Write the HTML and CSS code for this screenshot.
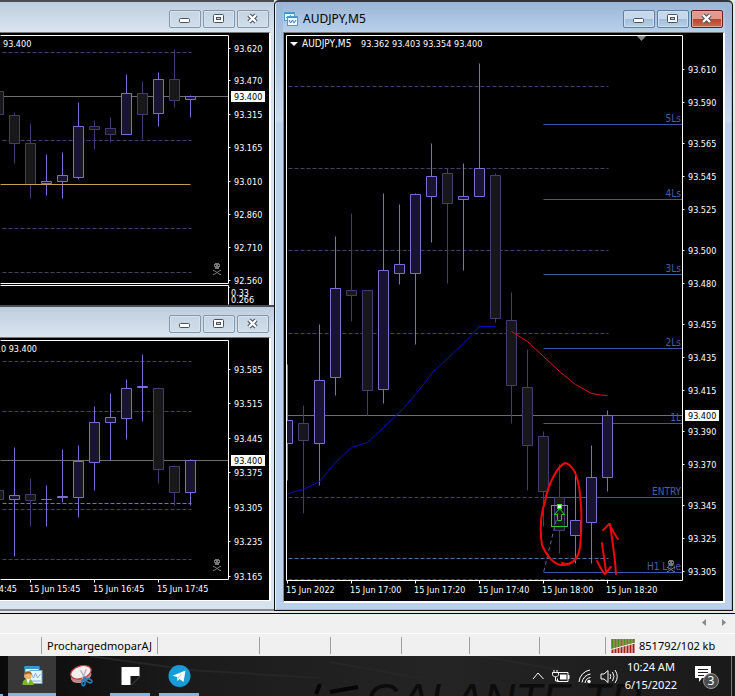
FILE: index.html
```html
<!DOCTYPE html>
<html lang="en">
<head>
<meta charset="utf-8">
<title>AUDJPY,M5</title>
<link rel="stylesheet" href="styles.css">
</head>
<body>
<svg class="defs" width="0" height="0" aria-hidden="true">
  <defs>
    <symbol id="ico-min" viewBox="0 0 16 12"><rect x="2.500" y="5.500" width="10" height="4" rx="1" fill="#fff" stroke="#4a5260"/></symbol>
    <symbol id="ico-max" viewBox="0 0 16 12"><rect x="2.500" y="1.500" width="10" height="8" rx="1" fill="#fff" stroke="#4a5260"/><rect x="5.500" y="4.500" width="4" height="2" fill="#c9d6e4" stroke="#4a5260"/></symbol>
    <symbol id="ico-close" viewBox="0 0 16 12"><path d="M4 2l7 7M11 2l-7 7" stroke="#4a5260" stroke-width="4.500"/><path d="M4 2l7 7M11 2l-7 7" stroke="#fff" stroke-width="2.300"/></symbol>
    <symbol id="skull" viewBox="0 0 10 13"><path fill="#777" fill-rule="evenodd" d="M3 0h4v1h1v3h-1v2h-4v-2h-1v-3h1zM3 2v1h1v-1zM6 2v1h1v-1z"/><path fill="none" stroke="#777" d="M1 7.500h1l6 4h1M9 7.500h-1l-6 4h-1"/></symbol>
  </defs>
</svg>

<main class="workspace">
  <div class="column">
    <section class="win">
      <header class="titlebar">
        <button class="cap" aria-label="Minimize"><svg><use href="#ico-min"/></svg></button>
        <button class="cap" aria-label="Maximize"><svg><use href="#ico-max"/></svg></button>
        <button class="cap" aria-label="Close"><svg><use href="#ico-close"/></svg></button>
      </header>
      <div class="pane">
        <svg class="chart" viewBox="0 33 269 272" data-chart="top">
          <g transform="translate(.5 .5)">
            <path class="grid" d="M2 52H191M2 140H191M2 228H191M2 272H191"/>
            <path class="price" d="M0 96H228"/>
            <g class="candles"></g>
            <path class="gold" d="M0 184H190"/>
            <path class="axis" d="M0 35H228V283H0M0 285H228V304M228 48h2M228 80h2M228 114h2M228 147h2M228 181h2M228 214h2M228 247h2M228 280h2M228 287h1"/>
          </g>
          <text x="3" y="47">93.400</text>
          <g class="labels"></g>
          <text x="231" y="296">0.33</text><text x="231" y="303">0.266</text>
          <use href="#skull" x="212" y="263" width="10" height="13"/>
        </svg>
      </div>
    </section>
    <section class="win win-last">
      <header class="titlebar">
        <button class="cap" aria-label="Minimize"><svg><use href="#ico-min"/></svg></button>
        <button class="cap" aria-label="Maximize"><svg><use href="#ico-max"/></svg></button>
        <button class="cap" aria-label="Close"><svg><use href="#ico-close"/></svg></button>
      </header>
      <div class="pane">
        <svg class="chart" viewBox="0 338 269 262" data-chart="bottom">
          <g transform="translate(.5 .5)">
            <path class="grid" d="M2 361H191M2 411H191M2 509H191M2 559H191"/>
            <path class="grid grid-lit" d="M2 503H191"/>
            <path class="price" d="M0 460H228"/>
            <g class="candles"></g>
            <path class="axis" d="M0 340H228V579H0M30 579v3M94 579v3M158 579v3M228 369h2M228 403h2M228 438h2M228 472h2M228 507h2M228 541h2M228 576h2"/>
          </g>
          <text x="37" y="352" text-anchor="end">10 93.400</text>
          <g class="labels"></g>
          <text x="17" y="592" text-anchor="end">14:45</text><text x="29" y="592">15 Jun 15:45</text><text x="93" y="592">15 Jun 16:45</text><text x="157" y="592">15 Jun 17:45</text>
          <use href="#skull" x="212" y="559" width="10" height="13"/>
        </svg>
      </div>
    </section>
  </div>

  <section class="win win-active">
    <header class="titlebar">
      <svg class="title-icon" viewBox="0 0 14 14"><rect x=".5" y=".5" width="10" height="8" fill="#e8f6fd" stroke="#4d9fd0"/><path d="M1 1.500h9" stroke="#3b93cc"/><path d="M2 6l2-2 1 1 2-2" fill="none" stroke="#4d9fd0"/><rect x="3.500" y="4.500" width="10" height="9" fill="#eefaff" stroke="#4d9fd0"/><path d="M4 5.500h9" stroke="#3b93cc"/><path d="M5 8l1.500 3 2-3 1.500 3 2-3" fill="none" stroke="#3b78a8"/></svg>
      <h1 class="title">AUDJPY,M5</h1>
      <button class="cap" aria-label="Minimize"><svg><use href="#ico-min"/></svg></button>
      <button class="cap" aria-label="Maximize"><svg><use href="#ico-max"/></svg></button>
      <button class="cap cap-close" aria-label="Close"><svg><use href="#ico-close"/></svg></button>
    </header>
    <div class="pane">
      <svg class="chart" viewBox="284 33 439 568" data-chart="main">
        <g transform="translate(.5 .5)">
          <path class="grid" d="M288 86H608M288 168H608M288 250H608M288 333H608M288 497H543M288 579H608"/>
          <path class="grid grid-cyan" d="M288 558H608"/>
          <path class="price" d="M287 415H682"/>
          <path class="level" d="M543 124H682M543 199H682M543 274H682M543 348H682M543 423H682M543 497H682M543 572H682"/>
          <g class="candles"></g>
          <path class="ma-blue" d="M287 494L291 492L303 489L319 481L335 462L351 447L367 442L383 427L402 409L415 394L433 371L447 358L463 343L479 326H495"/>
          <path class="ma-red" d="M511 331L527 341L543 356L559 371L575 384L591 393L600 394.500L607 395"/>
          <path class="order" d="M559 506L543 572"/>
          <path class="axis" d="M286 580V35H682V580ZM287 580v3M351 580v3M415 580v3M479 580v3M543 580v3M607 580v3M682 69h2M682 102h2M682 143h2M682 176h2M682 209h2M682 250h2M682 283h2M682 324h2M682 357h2M682 390h2M682 431h2M682 464h2M682 505h2M682 538h2M682 571h2"/>
          <rect class="mark" x="551" y="505" width="16" height="21"/>
          <path class="mark" d="M559 508l-5 6h3v6h4v-6h3z"/>
          <rect x="557" y="504" width="4" height="4" fill="#e8ffe8" stroke="#3ae03a"/>
        </g>
        <path d="M290 42h8l-4 4z" fill="#fff"/>
        <path d="M637 36h9l-4.500 5z" fill="#888"/>
        <text class="quote" x="302" y="47">AUDJPY,M5</text>
        <text x="361" y="47">93.362</text><text x="392" y="47">93.403</text><text x="423" y="47">93.354</text><text x="454" y="47">93.400</text>
        <g class="level-text" text-anchor="end"><text x="681" y="122">5Ls</text><text x="681" y="197">4Ls</text><text x="681" y="272">3Ls</text><text x="681" y="346">2Ls</text><text x="681" y="421">1L</text><text x="681" y="495">ENTRY</text><text x="681" y="570">H1 Line</text></g>
        <g class="labels"></g>
        <text x="286" y="593">15 Jun 2022</text><text x="350" y="593">15 Jun 17:00</text><text x="414" y="593">15 Jun 17:20</text><text x="478" y="593">15 Jun 17:40</text><text x="542" y="593">15 Jun 18:00</text><text x="606" y="593">15 Jun 18:20</text>
        <use href="#skull" x="666" y="560" width="10" height="13"/>
        <path class="pen" d="M565 463C558 466 548 483 545 502C540 516 540 532 542 545C547 557 555 565 562 565C571 565 578 561 580 547C583 520 581 488 576 475C573 467 568 463 565 463M576 559C572 564 567 565 562 563"/>
        <path class="pen" d="M602 543C603 553 605 562 606 573M597 561C600 567 603 573 605 574C608 572 609 568 611 567M616 574C615 555 612 540 610 524M603 530C606 528 608 525 609 524C612 529 615 535 618 539"/>
      </svg>
    </div>
  </section>
</main>

<div class="tabs">
  <button class="arrow" aria-label="Scroll left"><svg viewBox="0 0 5 7"><path d="M4 0v7l-4-3.500z" fill="#888"/></svg></button>
  <button class="arrow" aria-label="Scroll right"><svg viewBox="0 0 5 7"><path d="M1 0v7l4-3.500z" fill="#888"/></svg></button>
</div>

<div class="status">
  <span></span><span>ProchargedmoparAJ</span><span></span><span></span><span></span><span></span><span></span><span></span>
  <span class="traffic"><svg viewBox="0 0 24 14"><path d="M1.500 0V14M4.500 0V14M7.500 0V14M10.500 0V14M13.500 0V14M16.500 0V14M19.500 0V14M22.500 0V14" stroke="#a3221b" stroke-width="2"/><path d="M1.500 0V10M4.500 0V9M7.500 0V8.500M10.500 0V8M13.500 0V7M16.500 0V6M19.500 0V5M22.500 0V4" stroke="#4f8a1c" stroke-width="2"/><path d="M0 10.500L24 4" stroke="#f0f0f0"/></svg>851792/102 kb</span>
</div>

<footer class="taskbar">
  <svg class="wallpaper" viewBox="0 0 735 40" preserveAspectRatio="xMidYMid slice" aria-hidden="true">
    <path d="M90 0L190 14L320 22M330 6L420 22M480 0L560 14" stroke="#262626" stroke-width="2" fill="none"/>
    <path d="M316 38L320 28M330 36L358 31" stroke="#060606" stroke-width="4" fill="none"/>
    <text x="366" y="59">GALANTE TR</text>
  </svg>
  <nav class="apps">
    <button class="app app-active" aria-label="MetaTrader"><svg viewBox="0 0 22 22"><rect x="3.500" y="1.500" width="14" height="11" fill="#d9effb" stroke="#4193c9"/><path d="M3 3h15" stroke="#4193c9" stroke-width="2"/><rect x="8.500" y="5.500" width="12" height="13" fill="#e9f5fc" stroke="#6bacd6"/><path d="M10 9l2 4 2-5 2 5 3-4M11 16h8" stroke="#7fb0d4" fill="none"/><path d="M1 20c0-5 2-6 5-6s6 1 6 6z" fill="#79b82c"/><path d="M5 14l1.500 5 2-5z" fill="#fff"/><circle cx="6.500" cy="10.500" r="3.800" fill="#eeb26a"/><path d="M2.500 10c0-5 8-5 8 0-2-2-5-2-8 0z" fill="#a15c20"/></svg></button>
    <button class="app" aria-label="Snipping Tool"><svg viewBox="0 0 24 22"><g transform="rotate(-18 12 9)"><ellipse cx="11" cy="11" rx="11" ry="6.500" fill="#b78c8c"/><ellipse cx="12" cy="7" rx="11" ry="6.500" fill="#f7eeee" stroke="#ba3d40" stroke-width="1.300"/></g><path d="M11 5l5 9M17 4l-4 10" stroke="#aab4bc" stroke-width="1.500"/><ellipse cx="14" cy="18" rx="1.700" ry="3" fill="none" stroke="#287fb5" stroke-width="1.700"/><ellipse cx="20" cy="16" rx="3" ry="1.800" fill="none" stroke="#287fb5" stroke-width="1.700" transform="rotate(25 20 16)"/><path d="M14 15l3-2M17 15l-3-3" stroke="#287fb5" stroke-width="2"/></svg></button>
    <button class="app app-open" aria-label="Sticky Notes"><svg viewBox="0 0 22 22"><path d="M2 2h18v10l-8 8h-10z" fill="#fff"/><path d="M11 11h9v1l-8 8h-1z" fill="#151515"/></svg></button>
    <button class="app app-open" aria-label="Telegram"><svg viewBox="0 0 22 22"><circle cx="11" cy="11" r="11" fill="#179cd8"/><path d="M4 10.800L17 5.500 15 17l-4-3-2 2-.5-4z" fill="#fff"/><path d="M8.500 12.500L14.500 8 10 13.500 9 16z" fill="#b4d8ec"/></svg></button>
  </nav>
  <div class="tray">
    <svg width="14" height="20" viewBox="0 0 14 20"><path d="M2 13l5-6 5.500 6" class="line"/></svg>
    <svg width="18" height="20" viewBox="0 0 18 20"><path d="M6 6.500h10v9H5.500v-3" class="line"/><path d="M8 8.500h6.500v5H8zM16 9h1.500v4H16z" fill="#fff"/><path d="M2 4v3M5 4v3M.5 6.500h6v2c0 3-6 3-6 0zM3.500 11v4H7" class="line"/></svg>
    <svg width="16" height="20" viewBox="0 0 16 20"><path d="M2 16A13 13 0 0 1 13 4M5 16.500A10 10 0 0 1 13.500 8M8 17A6.500 6.500 0 0 1 13.500 11.500" class="line"/><circle cx="12" cy="15.500" r="1.700" fill="#fff"/></svg>
    <svg width="18" height="20" viewBox="0 0 18 20"><path d="M1 8h3l4-3.500v12L4 13H1zM10 8q1.500 2.500 0 5M12.500 6q3 4.500 0 9M15 4q4.500 6.500 0 13" class="line"/></svg>
    <time class="clock" datetime="2022-06-15T10:24">10:24 AM<br>6/15/2022</time>
    <button class="notify" aria-label="Notifications"><svg width="26" height="28" viewBox="0 0 26 28"><path d="M1 4h16v12H8l-3 4v-4H1z" fill="#fff"/><path d="M4 7.500h10M4 10.500h10M4 13.500h6" stroke="#222"/><circle cx="17" cy="19" r="7.500" fill="#4b4b4b" stroke="#999"/><text x="17" y="23" text-anchor="middle">3</text></svg></button>
  </div>
</footer>
<script src="charts.js"></script>
</body>
</html>
```
FILE: styles.css
```css
* { box-sizing: border-box; }

body {
  margin: 0;
  min-height: 100vh;
  background: #f0f0f0;
  font: 12px/16px "Noto Sans", "Open Sans", sans-serif;
  color: #000;
}

button { margin: 0; padding: 0; border: 0; background: none; font: inherit; }
svg { display: block; }
.defs { position: absolute; }

.workspace {
  display: grid;
  grid-template-columns: 274px minmax(0, 1fr);
  align-items: start;
  padding: 0 2px 2px 0;
  background: #e6e9ea;
  border-bottom: 1px solid #000;
}

.win {
  border-top: 2px solid #4b4d55;
  background: #d7e4ef;
  padding-right: 3px;
}
.win-last { padding-bottom: 8px; border-bottom: 2px solid #85898f; }

.titlebar {
  display: flex;
  align-items: center;
  justify-content: flex-end;
  gap: 2px;
  height: 30px;
  margin-right: -3px;
  padding: 4px 5px 0 0;
  background: linear-gradient(#becddd, #dae5f0);
}

.pane {
  border-top: 1px solid #777;
  border-right: 2px solid #fff;
}
.win-last .pane { border-bottom: 1px solid #fff; }

.cap {
  display: grid;
  place-items: center;
  width: 32px;
  height: 18px;
  border: 1px solid #8397ae;
  border-radius: 2px;
  background: linear-gradient(#c6d4e3, #d0ddea);
  box-shadow: inset 0 0 0 1px #d8e3ee;
}
.cap svg { width: 16px; height: 12px; }

.win-active {
  border: 1px solid #111;
  border-top: 2px solid #33353d;
  border-radius: 5px 5px 0 0;
  padding: 0 7px 7px 8px;
  background: linear-gradient(#9ab6d6, #c9dbef 118px, #b9d1ea 122px);
  box-shadow: inset 1px 0 #dff3fb, inset -1px -1px #62d0ee;
}
.win-active .titlebar {
  margin: 0;
  padding: 4px 2px 0 1px;
  background: linear-gradient(#9ab6d6, #b9d0ea);
}
.win-active .pane {
  border-left: 1px solid #888;
  border-bottom: 2px solid #fff;
}
.title-icon { width: 14px; height: 14px; }
.title { flex: 1; margin: 0 0 0 3px; font-size: 12px; font-weight: 400; }
.win-active .cap {
  border-color: #5f7fa5;
  background: linear-gradient(#c5d8ec 48%, #a3bfdd 52%, #b8d0e8);
  box-shadow: inset 0 0 0 1px #cfdff0;
}
.win-active .cap-close {
  border-color: #6b1b1b;
  background: linear-gradient(#e3998a 48%, #c0402c 52%, #d06a50);
  box-shadow: inset 0 0 0 1px #e5a596;
}

.chart {
  width: 100%;
  height: auto;
  background: #000;
  fill: #fff;
  font: 9px "DejaVu Sans Condensed", "DejaVu Sans", sans-serif;
}
.chart path { stroke-width: 1; }
.axis { fill: none; stroke: #fff; }
.grid { fill: none; stroke: #444268; stroke-dasharray: 4 2; }
.grid-lit { stroke: #77749c; }
.grid-cyan { stroke: #4e7396; }
.price { stroke: #6e6e6e; }
.gold { stroke: #c9a04c; }
.level { stroke: #3f55ac; }
.level-text { font-size: 10px; fill: #4462a8; }
.quote { font-size: 10px; }
.up { fill: #19142f; stroke: #7a6ed6; }
.down { fill: #18171a; stroke: #443b6e; }
.ma-blue { fill: none; stroke: #0a0ac0; }
.ma-red { fill: none; stroke: #e01414; }
.order { stroke: #5566a0; stroke-dasharray: 4 3; }
.mark { fill: none; stroke: #2fc42f; }
.chart .pen { fill: none; stroke: #f00808; stroke-width: 2; stroke-linecap: round; stroke-linejoin: round; }
.tag { fill: #fff; }
.tag-text { fill: #000; }

.tabs {
  display: flex;
  justify-content: flex-end;
  align-items: center;
  gap: 14px;
  height: 19px;
  padding: 0 9px 2px 0;
}
.arrow svg { width: 5px; height: 7px; }

.status {
  display: grid;
  grid-template-columns: 42fr 116fr 102fr 71fr 71fr 68fr 70fr 66fr 129fr;
  height: 23px;
  padding: 3px 0 2px;
  border-top: 1px solid #fff;
  font-size: 11px;
}
.status span {
  min-width: 0;
  padding-left: 5px;
  border-right: 1px solid #a0a0a0;
  line-height: 17px;
  white-space: nowrap;
}
.status .traffic { display: flex; align-items: center; gap: 4px; border: 0; }
.traffic svg { width: 24px; height: 14px; }

.taskbar {
  position: relative;
  display: flex;
  justify-content: space-between;
  height: 40px;
  background: linear-gradient(90deg, #0a0a0a, #1b1b1b 25%, #242424 60%, #1a1a1a);
  color: #fff;
  overflow: hidden;
}
.wallpaper {
  position: absolute;
  inset: 0;
  width: 100%;
  height: 100%;
  fill: #0c0c0c;
  font: italic 44px "Liberation Sans", sans-serif;
}
.apps, .tray { position: relative; display: flex; }
.apps { gap: 1px; padding-left: 5px; border-left: 3px solid transparent; border-image: linear-gradient(transparent 92%, #76b9ed 92%) 1; }
.app {
  display: grid;
  place-items: center;
  width: 48px;
  height: 40px;
}
.app svg { width: 23px; height: 22px; }
.app-open { background: linear-gradient(#76b9ed, #76b9ed) bottom / 40px 3px no-repeat; }
.app-active { background: linear-gradient(#76b9ed, #76b9ed) bottom / 48px 3px no-repeat #383838; }
.tray { align-items: center; gap: 7px; padding-right: 3px; }
.tray::after { content: ""; width: 1px; height: 40px; background: #777; }
.line { fill: none; stroke: #fff; stroke-width: 1; }
.clock { font-size: 11px; line-height: 18px; text-align: center; }
.notify { margin: 0 4px 0 10px; }
.notify svg { font: 12px "Noto Sans", sans-serif; fill: #fff; }
```
FILE: charts.js
```js
// Each candle: [x, high, bodyTop, bodyBottom, low, rising]
const charts = {
  top: {
    labelX: 234, boxX: 231,
    candles: [[-2,91,91,114,114,0],[14,112,115,143,163,0],[30,123,143,184,198,0],[46,154,181,183,195,1],[62,152,175,181,198,1],[78,102,126,177,179,1],[94,120,126,129,149,0],[110,117,128,134,142,0],[126,74,93,134,134,1],[142,81,93,114,139,0],[158,72,79,113,126,1],[174,49,79,100,107,0],[190,95,96,99,117,1]],
    labels: [["93.620",48],["93.470",80],["93.400",96,1],["93.315",114],["93.165",147],["93.010",181],["92.860",214],["92.710",247],["92.560",280]]
  },
  bottom: {
    labelX: 234, boxX: 231,
    candles: [[-2,490,490,499,499,0],[14,447,495,499,556,1],[30,478,494,500,526,0],[46,485,499,499,526,1],[62,449,496,497,502,1],[78,445,461,497,517,1],[94,406,422,462,490,1],[110,393,417,422,460,1],[126,379,388,418,439,1],[142,354,386,387,421,1],[158,387,388,469,483,0],[174,465,466,492,505,0],[190,459,460,492,505,1]],
    labels: [["93.585",369],["93.515",403],["93.445",438],["93.375",472],["93.400",460,1],["93.305",507],["93.235",541],["93.165",576]]
  },
  main: {
    labelX: 688, boxX: 685,
    candles: [[287,364,420,443,480,1],[303,405,423,440,513,0],[319,324,380,443,485,1],[335,236,288,377,395,1],[351,213,290,295,321,0],[367,290,290,390,415,0],[383,193,270,389,403,1],[399,204,264,273,284,1],[415,193,194,273,344,1],[431,143,176,196,242,1],[447,168,173,203,283,0],[463,163,196,199,270,1],[479,63,168,196,196,1],[495,173,175,318,322,0],[511,292,320,385,423,0],[527,349,387,445,490,0],[543,431,436,491,526,0],[559,464,497,530,553,0],[575,471,520,535,563,1],[591,445,477,522,563,1],[607,410,415,477,491,1]],
    labels: [["93.610",69],["93.590",102],["93.565",143],["93.545",176],["93.525",209],["93.500",250],["93.480",283],["93.455",324],["93.435",357],["93.415",390],["93.400",415,1],["93.390",431],["93.370",464],["93.345",505],["93.325",538],["93.305",571]]
  }
};

for (const [name, chart] of Object.entries(charts)) {
  const svg = document.querySelector(`[data-chart="${name}"]`);
  svg.querySelector(".candles").innerHTML = chart.candles.map(([x, high, top, bottom, low, rising]) => {
    const left = name === "main" ? Math.max(x - 5, 286) : x - 5;
    return `<path class="${rising ? "up" : "down"}" d="M${x} ${high}V${top}M${x} ${bottom}V${low}M${left} ${top}H${x + 5}V${bottom}H${left}Z"/>`;
  }).join("");
  svg.querySelector(".labels").innerHTML = chart.labels.map(([text, y, current]) =>
    (current ? `<rect class="tag" x="${chart.boxX}" y="${y - 5}" width="34" height="11"/>` : "") +
    `<text class="${current ? "tag-text" : ""}" x="${chart.labelX}" y="${y + 4}">${text}</text>`
  ).join("");
}
```
